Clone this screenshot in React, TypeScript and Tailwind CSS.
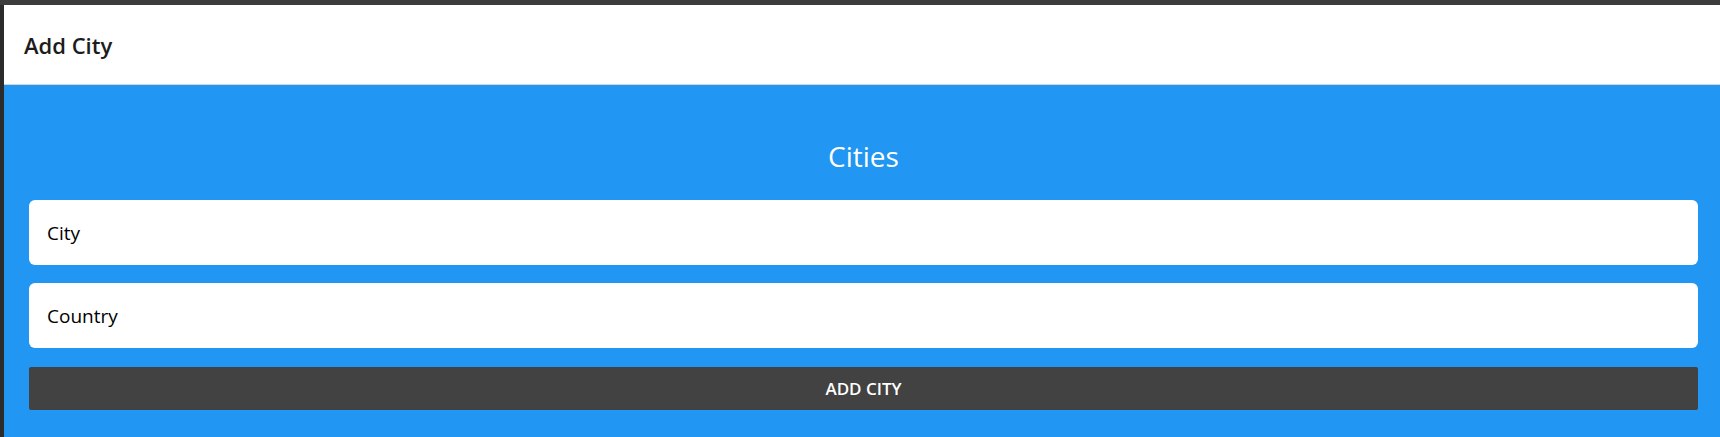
import React, { useState } from 'react';

const font = { fontFamily: '"Open Sans", "Noto Sans", sans-serif' };

export default function App() {
  const [city, setCity] = useState('');
  const [country, setCountry] = useState('');

  return (
    <div className="h-[437px] w-full flex flex-col bg-[#3c3c3c] overflow-hidden" style={font}>
      <div className="h-[5px] shrink-0 bg-[#3c3c3c]"></div>
      <div className="flex flex-1 min-h-0">
        <div className="w-[4px] shrink-0 bg-[#2b2b2b]"></div>
        <div className="flex-1 flex flex-col min-w-0">
          <header className="h-[80px] shrink-0 bg-white border-b border-[#d4d4d4] flex items-center pl-[20px]">
            <h1 className="text-[22px] font-semibold text-[#1c1c1c] leading-none">Add City</h1>
          </header>

          <main className="flex-1 bg-[#2196f3] pt-[54px] pl-[25px] pr-[22px]">
            <h2 className="text-center text-white text-[28px] leading-[34px] font-normal mb-[27px]">
              Cities
            </h2>
            <div className="flex flex-col gap-[18px]">
              <input
                value={city}
                onChange={(e) => setCity(e.target.value)}
                placeholder="City"
                className="w-full h-[65px] bg-white rounded-[6px] px-[18px] text-[19px] text-black placeholder:text-black outline-none"
              />
              <input
                value={country}
                onChange={(e) => setCountry(e.target.value)}
                placeholder="Country"
                className="w-full h-[65px] bg-white rounded-[6px] px-[18px] text-[19px] text-black placeholder:text-black outline-none"
              />
            </div>
            <button className="mt-[19px] w-full h-[43px] bg-[#424242] rounded-[2px] text-white text-[17px] font-semibold uppercase">
              Add City
            </button>
          </main>
        </div>
      </div>
    </div>
  );
}
